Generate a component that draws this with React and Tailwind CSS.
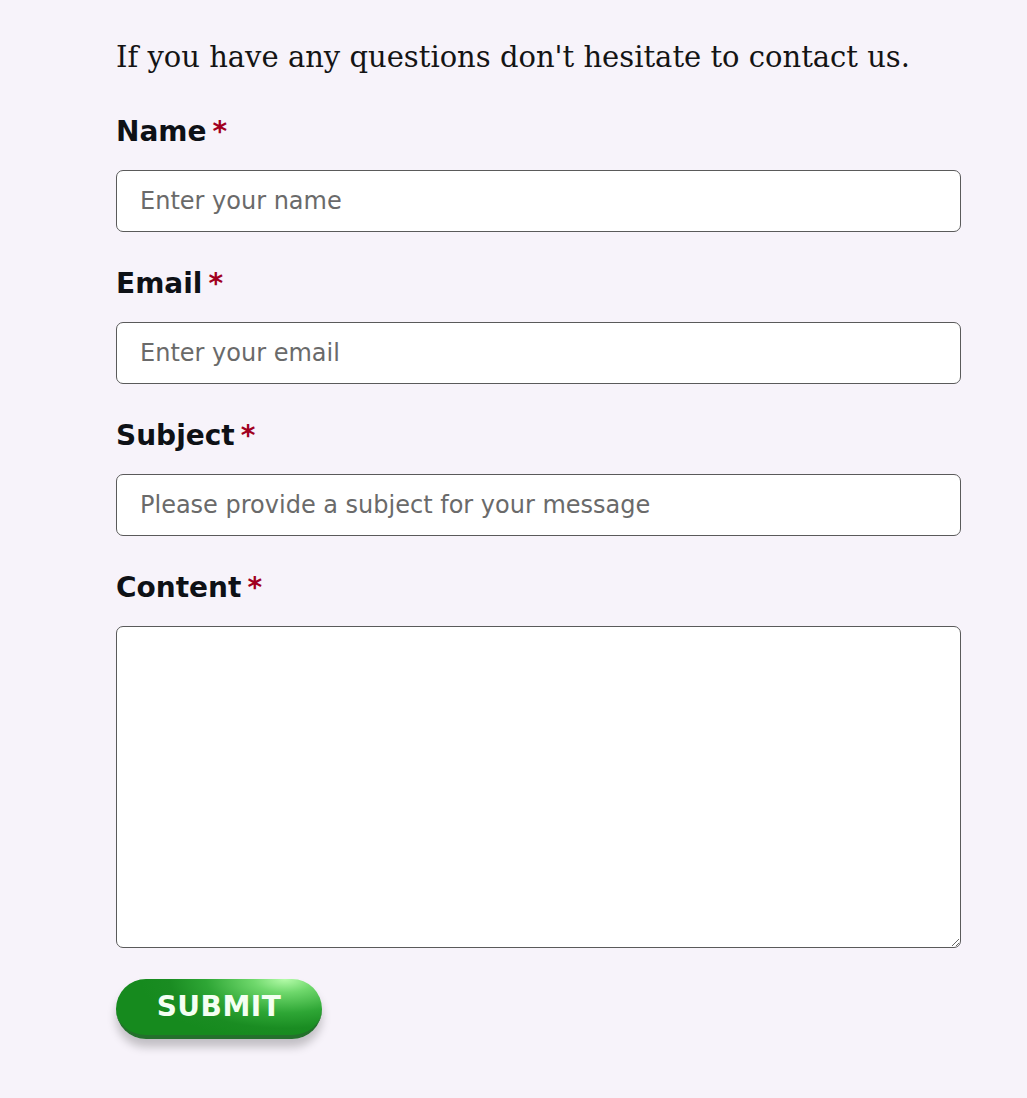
import React from 'react';

const Field = ({ label, children }) => (
  <div className="flex flex-col">
    <label className="h-[32px] text-[28px] font-bold leading-[32px] text-[#0e1116]">
      {label}
      <span className="ml-[6px] text-[#a1001f]">*</span>
    </label>
    <div className="mt-[22px]">{children}</div>
  </div>
);

const inputCls =
  "w-full h-[62px] rounded-[7px] border border-[#5a5a5a] bg-white px-[23px] text-[24px] font-['DejaVu_Sans',sans-serif] text-[#222] placeholder:text-[#6a6a6a] outline-none";

const App = () => {
  return (
    <div className="min-h-[1098px] w-full bg-[#f7f3fa] font-['DejaVu_Sans','Noto_Sans',sans-serif]">
      <div className="ml-[116px] w-[845px] pt-[35px]">
        <p className="font-['DejaVu_Serif','Liberation_Serif',serif] text-[29px] leading-[44px] text-[#141414]">
          If you have any questions don't hesitate to contact us.
        </p>
        <form className="mt-[37px] flex flex-col gap-[36px]" onSubmit={(e) => e.preventDefault()}>
          <Field label="Name">
            <input className={inputCls} placeholder="Enter your name" type="text" />
          </Field>
          <Field label="Email">
            <input className={inputCls} placeholder="Enter your email" type="email" />
          </Field>
          <Field label="Subject">
            <input className={inputCls} placeholder="Please provide a subject for your message" type="text" />
          </Field>
          <Field label="Content">
            <textarea className="block h-[322px] w-full rounded-[7px] border border-[#5a5a5a] bg-white px-[23px] py-[16px] font-['DejaVu_Sans',sans-serif] text-[22px] outline-none" />
          </Field>
        </form>
        <button className="mt-[31px] h-[60px] w-[206px] rounded-full border-b-[4px] border-[#24702c] bg-[radial-gradient(ellipse_70%_110%_at_82%_0%,#b5fcaa_0%,#6fd86c_22%,#2ea635_55%,#1a8c22_80%,#168a1e_100%)] text-[28px] font-bold tracking-[0.5px] text-[#f4fff2] shadow-[0_8px_10px_rgba(0,0,0,0.22)]">
          SUBMIT
        </button>
      </div>
    </div>
  );
};

export default App;
